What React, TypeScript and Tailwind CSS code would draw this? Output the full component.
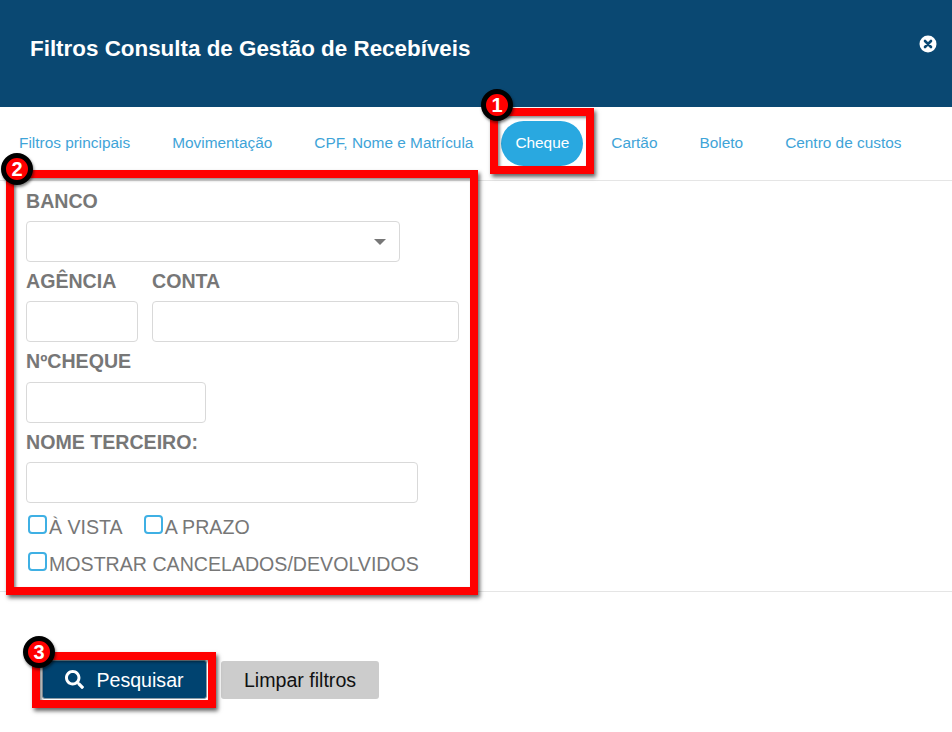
import React from 'react';
import { FaSearch } from 'react-icons/fa';

const tabs = ['Filtros principais', 'Movimentação', 'CPF, Nome e Matrícula', 'Cheque', 'Cartão', 'Boleto', 'Centro de custos'];

const Mark = ({ className }: { className: string }) => (
  <div className={`absolute border-[8px] border-[#ff0000] shadow-[2px_3px_4px_rgba(0,0,0,0.6),inset_2px_2px_3px_rgba(0,0,0,0.45)] ${className}`} />
);

const Badge = ({ n, className }: { n: number; className: string }) => (
  <div className={`absolute w-8 h-8 rounded-full bg-[#ff0000] border-[5px] border-black flex items-center justify-center text-white font-black text-[20px] leading-none shadow-[1px_2px_3px_rgba(0,0,0,0.5)] ${className}`}>
    {n}
  </div>
);

const Label = ({ children }: { children: React.ReactNode }) => (
  <label className="block text-[19.6px] leading-[24px] font-bold text-[#777777] whitespace-nowrap">{children}</label>
);

const Check = ({ label }: { label: string }) => (
  <label className="flex items-center text-[19.6px] leading-[24px] text-[#777777] whitespace-nowrap">
    <span className="block w-[19px] h-[19px] -mt-[5px] mr-[2px] rounded-[4px] border-2 border-[#3fb0e4] bg-white" />
    {label}
  </label>
);

const inputCls = 'block h-[41px] bg-white border border-[#d9d9d9] rounded-[4px]';

export default function App() {
  return (
    <div className="relative w-[952px] h-[732px] bg-white overflow-hidden font-['Liberation_Sans',Arial,sans-serif]">
      <header className="h-[107px] bg-[#0a4872] flex items-start justify-between pl-[30px] pr-[15px] pt-[35px]">
        <h1 className="text-[22.4px] leading-[27px] font-bold text-white">Filtros Consulta de Gestão de Recebíveis</h1>
        <svg width="18" height="18" viewBox="0 0 18 18">
          <circle cx="9" cy="9" r="8.5" fill="#fff" />
          <path d="M6 6l6 6M12 6l-6 6" stroke="#0a4872" strokeWidth="2.6" strokeLinecap="round" />
        </svg>
      </header>

      <nav className="h-[74px] border-b border-[#e5e5e5] flex items-start gap-[12px] pt-[14px] pl-[4px]">
        {tabs.map((t) =>
          t === 'Cheque' ? (
            <span key={t} className="h-[45px] mx-px px-[14px] rounded-full bg-[#29a8e0] text-white text-[15.4px] leading-[44px]">{t}</span>
          ) : (
            <span key={t} className="h-[45px] px-[15px] text-[#3fa4d8] text-[15.4px] leading-[44px] whitespace-nowrap">{t}</span>
          )
        )}
      </nav>

      <section className="h-[411px] border-b border-[#e5e5e5] pl-[26px] pt-[8px]">
        <Label>BANCO</Label>
        <div className={`${inputCls} w-[374px] mt-[8px] flex items-center justify-end pr-[13px]`}>
          <span className="w-0 h-0 border-x-[6px] border-x-transparent border-t-[6px] border-t-[#777777]" />
        </div>
        <div className="flex gap-[14px] mt-[7px]">
          <div>
            <Label>AGÊNCIA</Label>
            <div className={`${inputCls} w-[112px] mt-[8px]`} />
          </div>
          <div>
            <Label>CONTA</Label>
            <div className={`${inputCls} w-[307px] mt-[8px]`} />
          </div>
        </div>
        <div className="mt-[7px]">
          <Label>NºCHEQUE</Label>
          <div className={`${inputCls} w-[180px] mt-[9px]`} />
        </div>
        <div className="mt-[7px]">
          <Label>NOME TERCEIRO:</Label>
          <div className={`${inputCls} w-[392px] mt-[8px]`} />
        </div>
        <div className="flex gap-[21px] pl-[2px] mt-[12px]">
          <Check label="À VISTA" />
          <Check label="A PRAZO" />
        </div>
        <div className="pl-[2px] mt-[13px]">
          <Check label="MOSTRAR CANCELADOS/DEVOLVIDOS" />
        </div>
      </section>

      <footer className="flex items-start gap-[14px] pl-[42px] pt-[68px]">
        <button className="w-[165px] h-[39px] flex items-center justify-center gap-[12px] bg-[#004370] border border-[#8a9aa6] rounded-[3px] text-white text-[19.6px] leading-[40px]">
          <FaSearch size={19} />
          Pesquisar
        </button>
        <button className="w-[158px] h-[38px] mt-px bg-[#cccccc] rounded-[3px] text-[#111111] text-[19.6px] leading-[38px]">Limpar filtros</button>
      </footer>

      <Mark className="left-[490px] top-[108px] w-[104px] h-[66px]" />
      <Mark className="left-[6px] top-[170px] w-[472px] h-[425px]" />
      <Mark className="left-[32px] top-[652px] w-[184px] h-[56px]" />
      <Badge n={1} className="left-[481px] top-[89px]" />
      <Badge n={2} className="left-[1px] top-[153px]" />
      <Badge n={3} className="left-[23px] top-[636px]" />
    </div>
  );
}
